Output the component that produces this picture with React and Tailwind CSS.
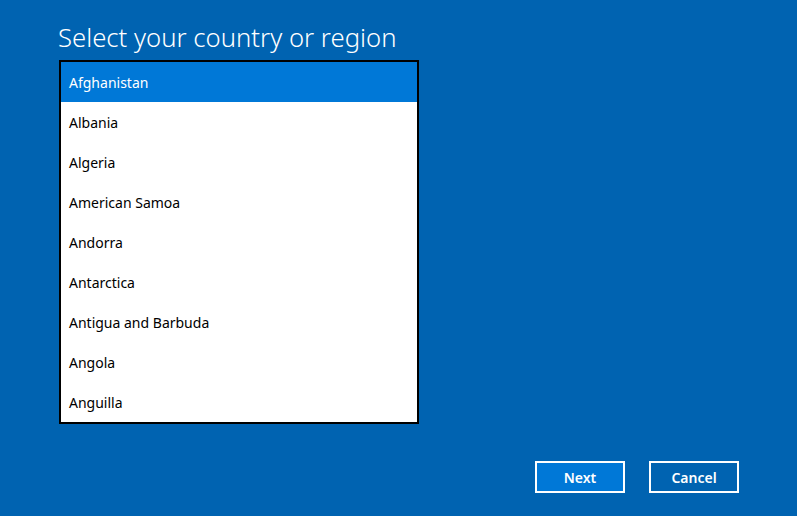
import React from 'react'

const countries = [
  'Afghanistan',
  'Albania',
  'Algeria',
  'American Samoa',
  'Andorra',
  'Antarctica',
  'Antigua and Barbuda',
  'Angola',
  'Anguilla',
]

export default function App() {
  const selected = 0

  return (
    <div className="w-[797px] h-[516px] bg-[#0063b1] overflow-hidden flex flex-col font-['Noto_Sans',sans-serif]">
      <div className="pl-[59px] pt-[20px]">
        <h1 className="text-[25.7px] leading-[36px] h-[36px] font-light text-white -ml-[1px]">
          Select your country or region
        </h1>
        <div className="mt-[4px] w-[360px] h-[364px] border-2 border-black bg-white">
          {countries.map((c, i) => (
            <div
              key={c}
              className={
                i === selected
                  ? 'h-[40px] flex items-center pl-[8px] text-[14px] bg-[#0078d7] text-white'
                  : 'h-[40px] flex items-center pl-[8px] text-[14px] text-black'
              }
            >
              {c}
            </div>
          ))}
        </div>
      </div>

      <div className="flex justify-end gap-[24px] pr-[58px] mt-[37px]">
        <button className="w-[90px] h-[32px] border-2 border-white bg-[#0078d7] text-white text-[14px] font-semibold">
          Next
        </button>
        <button className="w-[90px] h-[32px] border-2 border-white text-white text-[14px] font-semibold">
          Cancel
        </button>
      </div>
    </div>
  )
}
